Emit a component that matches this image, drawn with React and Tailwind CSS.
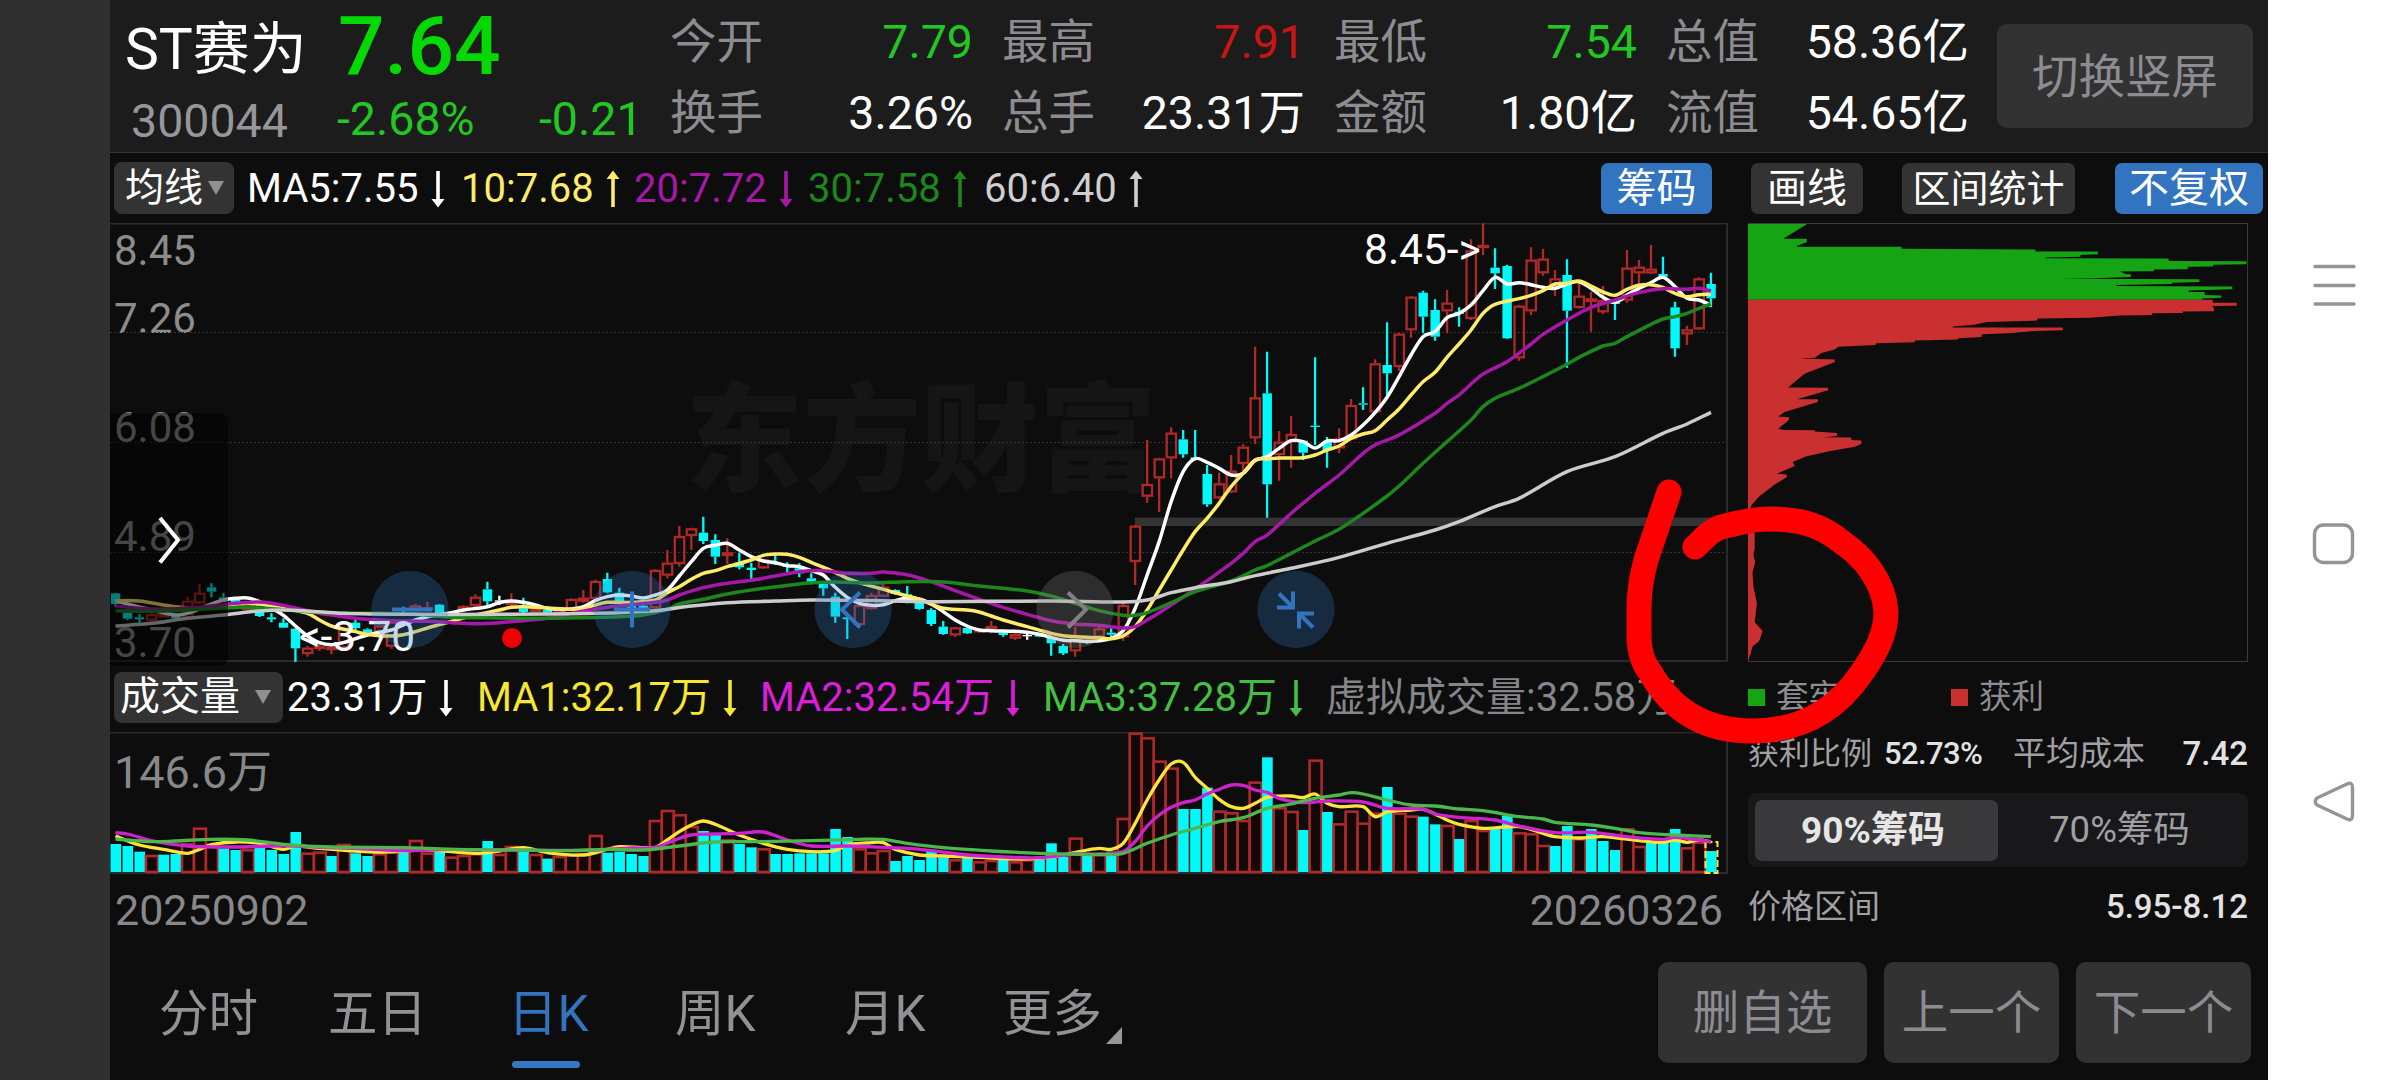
import clsx from "clsx";

const STEP = 11.996;
const xAt = (i) => 5.5 + i * STEP;

// Candles: [type, body top, body bottom, high, low], in thirds of a pixel.
// r = rising (hollow), c = falling (filled), w = flat
const EARLY_CANDLES = [
  ["c", 580, 612, 578, 620], ["c", 638, 656, 635, 660], ["c", 652, 658, 643, 668], ["r", 642, 662, 640, 664],
  ["r", 643, 650, 640, 652], ["c", 645, 655, 643, 658], ["r", 602, 655, 590, 657], ["r", 578, 610, 553, 612],
  ["c", 562, 575, 550, 592], ["c", 592, 604, 578, 606], ["c", 600, 606, 598, 608], ["r", 605, 630, 603, 632],
  ["c", 628, 648, 626, 651], ["c", 652, 658, 640, 667], ["c", 668, 683, 655, 684], ["c", 686, 745, 684, 786],
  ["r", 743, 762, 738, 770], ["r", 738, 746, 725, 753], ["r", 740, 750, 736, 763], ["r", 668, 745, 666, 747],
  ["c", 668, 684, 660, 690], ["c", 688, 698, 685, 700], ["r", 676, 696, 674, 698], ["r", 665, 740, 663, 746],
  ["c", 628, 633, 620, 645], ["r", 616, 630, 612, 632], ["r", 622, 630, 605, 635], ["c", 614, 640, 612, 641],
  ["r", 636, 644, 634, 645], ["r", 618, 632, 616, 634], ["r", 590, 618, 583, 625], ["c", 568, 604, 545, 615],
  ["w", 601, 605, 587, 615], ["r", 605, 615, 580, 625], ["c", 625, 636, 593, 640], ["r", 628, 636, 624, 638],
  ["c", 630, 638, 628, 640], ["r", 628, 636, 626, 638], ["r", 597, 630, 595, 632], ["r", 593, 605, 570, 608],
  ["r", 543, 597, 539, 600], ["c", 537, 577, 518, 580], ["c", 578, 603, 563, 605], ["c", 608, 625, 602, 628],
  ["c", 617, 627, 614, 630], ["r", 510, 625, 508, 627], ["r", 488, 527, 450, 535], ["r", 408, 492, 378, 500],
  ["r", 385, 408, 383, 450], ["c", 398, 423, 350, 432], ["c", 420, 470, 403, 492], ["r", 457, 468, 415, 492],
  ["c", 488, 502, 458, 508], ["c", 503, 510, 488, 540], ["r", 478, 505, 476, 507], ["c", 488, 493, 465, 495],
  ["c", 496, 501, 487, 517], ["c", 505, 520, 490, 532], ["c", 535, 548, 520, 553], ["c", 552, 565, 545, 587],
  ["c", 590, 650, 578, 668], ["c", 652, 658, 645, 717], ["r", 615, 675, 612, 677], ["r", 585, 627, 578, 629],
  ["r", 560, 590, 552, 592], ["c", 570, 582, 568, 584], ["c", 583, 607, 558, 610], ["c", 605, 627, 600, 629],
  ["c", 630, 672, 625, 678], ["c", 680, 702, 663, 704], ["r", 682, 706, 680, 711], ["c", 684, 700, 682, 702],
  ["r", 688, 697, 686, 699], ["r", 678, 686, 663, 700], ["c", 698, 705, 690, 710], ["r", 702, 716, 698, 720],
  ["w", 705, 709, 698, 719], ["c", 704, 710, 700, 712], ["c", 712, 730, 708, 767], ["c", 738, 760, 732, 765],
  ["r", 705, 754, 680, 770], ["c", 722, 730, 720, 733], ["r", 685, 712, 680, 714], ["c", 698, 704, 685, 712],
  ["r", 615, 712, 600, 722], ["r", 377, 486, 375, 555], ["r", 252, 290, 120, 308], ["r", 175, 235, 173, 336],
  ["r", 98, 175, 82, 235], ["c", 118, 163, 90, 173], ["c", 172, 178, 90, 180],
];
const LATE_CANDLES = [
  ["c", 762, 853, 735, 860], ["r", 790, 835, 758, 837], ["r", 752, 817, 705, 819], ["r", 680, 732, 673, 757],
  ["r", 532, 655, 380, 672], ["c", 520, 793, 395, 893], ["r", 665, 705, 633, 782], ["r", 642, 665, 588, 743],
  ["c", 662, 698, 660, 720], ["c", 617, 621, 412, 675], ["c", 665, 690, 651, 743], ["r", 655, 685, 625, 700],
  ["r", 555, 658, 537, 660], ["c", 550, 554, 502, 570], ["r", 430, 577, 418, 580], ["c", 435, 460, 307, 525],
  ["r", 341, 441, 338, 453], ["r", 230, 331, 228, 353], ["c", 218, 290, 212, 340], ["c", 270, 350, 238, 362],
  ["r", 248, 274, 210, 340], ["c", 275, 282, 262, 320], ["r", 91, 297, 58, 300], ["r", 75, 84, 10, 105],
  ["c", 143, 160, 85, 207], ["c", 138, 355, 134, 357], ["r", 257, 415, 254, 422], ["r", 119, 274, 82, 285],
  ["r", 116, 160, 87, 167], ["r", 175, 195, 150, 228], ["c", 165, 272, 118, 443], ["r", 227, 264, 180, 266],
  ["r", 235, 246, 215, 335], ["r", 240, 277, 198, 283], ["c", 240, 252, 238, 300], ["r", 143, 242, 90, 248],
  ["r", 140, 160, 120, 205], ["r", 146, 160, 75, 163], ["c", 162, 170, 110, 172], ["c", 262, 385, 245, 410],
  ["r", 328, 343, 317, 375], ["r", 175, 328, 172, 330], ["c", 192, 235, 158, 262],
];

const early = (v) => (v + 531) / 3;
const late = (v) => (v - 9) / 3;

const CANDLES = [
  ...EARLY_CANDLES.map(([t, ...v]) => [t, ...v.map(early)]),
  ...LATE_CANDLES.map(([t, ...v]) => [t, ...v.map(late)]),
];

// Moving averages: flat lists of "index,y"
const parse = (text, fn) =>
  text.trim().split(/\s+/).map((p) => {
    const [i, y] = p.split(",").map(Number);
    return [xAt(i), fn(y)];
  });

const smooth = (pts) =>
  pts.reduce((d, p, i) => {
    if (i === 0) return `M${p[0]},${p[1]}`;
    const a = pts[i - 2] || pts[i - 1];
    const b = pts[i - 1];
    const n = pts[i + 1] || p;
    const k = (p[0] - b[0]) / 3;
    const s1 = (p[1] - a[1]) / (p[0] - a[0]);
    const s2 = (n[1] - b[1]) / (n[0] - b[0]);
    return `${d}C${b[0] + k},${b[1] + s1 * k} ${p[0] - k},${p[1] - s2 * k} ${p[0]},${p[1]}`;
  }, "");

const PRICE_LINES = [
  {
    color: "#ffffff",
    early: `0,602 1,612 3,630 5,645 6,640 8,612 9,600 10,595 11,594 12,605 13,625 14,646 15,678 16,708 17,728 18,734 19,728 20,716
      21,705 22,697 23,690 24,675 25,660 26,650 28,638 29,630 31,620 32,608 33,603 34,607 35,615 36,625 37,628 38,627 39,620 40,602
      41,590 42,585 43,588 44,594 45,585 46,570 47,528 48,485 49,445 50,436 51,430 52,450 53,470 54,483 55,488 56,497 57,500 58,512
      59,525 60,562 61,592 62,610 63,616 64,614 65,602 66,595 67,597 68,612 69,635 70,660 71,678 72,690 73,692 75,694 76,697 77,703
      78,712 79,721 80,722 81,724 82,722 83,715 84,692 85,625`,
    late: `86,1065 87,965 88,845 89,755 90,716 91,727 92,745 93,765 94,760 95,722 96,710 97,685 98,662 99,665 100,684 101,663 102,662
      103,645 104,615 105,578 106,532 107,470 108,405 109,350 110,335 111,293 112,280 113,255 114,212 115,172 116,192 117,188 118,194
      119,202 120,205 121,192 122,185 123,205 124,232 125,247 126,225 127,205 128,188 129,172 130,200 131,235 132,240 133,256`,
  },
  {
    color: "#ffec6a",
    early: `0,602 2,603 4,615 6,624 8,624 10,612 12,612 14,625 16,640 17,660 18,678 20,695 21,703 22,707 23,708 24,704 25,695 26,684
      27,674 28,664 30,645 32,630 33,622 34,620 36,624 38,628 39,626 40,615 41,607 43,607 45,600 46,578 47,560 48,538 49,520 50,512
      51,500 53,480 54,466 55,462 56,463 57,472 58,487 60,517 61,535 62,548 64,568 66,588 67,598 68,612 69,625 71,630 72,636 73,648
      74,660 76,680 78,700 79,707 80,710 82,713 83,716 84,708 85,680`,
    late: `86,1170 87,1110 88,1050 89,990 90,935 91,895 92,850 93,800 94,760 95,720 96,717 97,714 99,713 100,705 101,690 102,678 103,655
      104,642 105,632 106,600 107,567 108,525 109,485 110,457 111,412 112,372 113,330 114,280 115,253 117,236 118,226 119,212 120,192
      121,190 122,183 123,198 124,216 125,226 126,208 127,196 128,194 129,202 130,220 131,230 132,224 133,222`,
  },
  {
    color: "#a818a8",
    early: `0,618 3,627 6,624 8,618 10,610 12,606 13,610 15,624 17,640 19,650 21,658 23,662 26,664 28,668 30,671 32,668 34,662 36,655
      38,640 41,622 43,614 45,607 46,600 47,585 49,563 51,550 53,541 55,528 57,515 59,512 61,520 63,520 64,516 66,524 68,545 70,572
      72,598 74,622 76,643 78,662 80,672 82,676 84,684 85,680`,
    late: `86,1200 87,1178 90,1107 93,1030 94,1000 95,965 96,945 98,880 100,820 102,765 104,700 105,675 107,645 110,580 111,550 112,525
      113,492 114,462 116,425 118,372 119,343 121,300 123,262 125,240 127,218 129,206 131,208 132,205 133,213`,
  },
  {
    color: "#1d861d",
    early: `0,632 3,634 6,630 9,624 11,622 13,626 16,635 19,640 22,640 25,643 28,652 31,653 35,655 39,653 42,650 44,645 46,628 47,612
      49,598 51,582 54,565 57,552 58,548 60,546 63,549 66,545 69,546 72,558 74,565 76,573 78,588 80,610 82,632 84,646 85,646`,
    late: `86,1178 88,1148 90,1115 93,1083 95,1050 96,1037 98,1000 100,963 102,928 104,880 106,828 107,798 109,730 111,665 112,633
      113,600 114,560 115,535 117,505 119,470 121,433 122,412 124,378 125,370 126,350 128,313 129,297 130,290 131,280 132,265 133,252`,
  },
  {
    color: "#cccccc",
    early: `0,678 3,670 6,655 9,645 12,633 14,630 16,633 19,640 24,643 32,643 40,640 45,632 48,618 51,608 55,603 58,600 64,602 68,605
      78,603 84,606`,
    late: `86,1140 88,1118 90,1103 93,1085 95,1067 98,1045 102,1012 106,970 110,930 112,905 115,860 117,835 121,755 125,710 129,640
      131,612 133,577`,
  },
].map((l) => ({ color: l.color, d: smooth([...parse(l.early, early), ...parse(l.late, late)]) }));

const vol = (v) => (v - 36) / 3;

const VOLUMES = `c372 c378 c395 r405 c404 c402 r370 r323 r372 c385 c390 r388 c375 c390 c402 c336 r398 r395 c408 r372 c400 c408 r400
  r395 c392 r360 r398 c395 r410 r405 r400 c363 r402 r378 c392 r402 c416 r408 r402 r400 r345 c398 c395 c402 c408 r300 r270 r283 r318
  c333 c345 r358 c372 c382 r385 c402 c402 c400 c400 c400 c327 c351 r385 r397 r390 c423 c408 c420 c393 c412 r418 c412 r424 r420 c420
  r424 r418 c418 c370 c410 r353 c405 r402 c395 r294 r38 r52 r122 r143 c267 c267 c203 r272 r277 r300 r185 c112 r262 r273 c330 r119
  c276 r310 r272 r308 r278 c201 r278 r287 c290 c313 r315 c357 r300 r330 c322 c287 r337 r340 r375 c378 c318 r355 c327 c363 c390 r325
  r378 c368 c365 c327 r382 r365 c393`
  .split(/\s+/)
  .map((v) => ({ type: v[0], top: vol(Number(v.slice(1))) }));

const VOLUME_LINES = [
  {
    color: "#ffe43c",
    points: `0,348 2,375 4,388 6,400 7,388 8,374 10,366 12,370 14,388 15,378 17,385 20,393 22,396 26,390 30,400 32,393 34,383 36,398
      39,405 41,388 42,380 45,382 46,360 47,335 48,315 49,303 50,313 52,345 54,370 56,388 58,395 60,392 61,375 63,368 64,368 65,388
      67,405 69,408 72,412 75,417 77,415 79,405 81,390 82,385 83,388 84,370 85,310 86,240 87,180 88,132 89,127 90,172 91,205 92,238
      93,260 94,265 95,250 96,232 98,228 99,233 100,222 101,250 102,260 104,260 105,290 106,276 108,270 109,268 110,282 111,300
      112,313 114,325 117,320 119,340 120,350 122,354 124,350 127,362 129,367 130,360 131,367 132,360 133,366`,
  },
  {
    color: "#cf22cf",
    points: `0,338 1,342 3,362 6,378 10,381 13,378 15,378 17,382 20,385 24,392 28,388 32,390 38,391 40,390 43,384 45,382 47,355 48,345
      50,342 52,340 54,336 56,360 58,378 61,378 64,382 66,385 68,392 71,405 74,411 77,413 80,402 82,402 84,395 85,365 86,318 87,285
      88,262 89,248 90,240 91,222 92,208 93,195 94,196 95,210 96,217 97,235 99,248 101,243 104,246 106,265 109,267 110,282 112,292
      115,300 117,318 120,338 123,337 126,350 129,358 130,352 132,360 133,365`,
  },
  {
    color: "#4cb84c",
    points: `0,357 3,365 5,363 8,358 11,360 14,373 18,381 24,383 28,388 34,390 38,392 41,388 44,390 47,378 50,366 54,365 58,362 62,358
      64,358 66,370 69,383 73,393 77,400 83,404 84,400 86,370 88,345 90,325 92,305 94,293 96,265 98,252 100,235 102,225 103,218
      104,222 106,240 108,255 110,258 112,267 114,272 117,290 119,297 120,307 123,315 125,325 127,338 130,345 133,350`,
  },
].map((l) => ({ color: l.color, d: smooth(parse(l.points, vol)) }));

const CHIPS_LOSS = `0,0 133,0 79,43 132,43 132,53 110,63 110,66 345,66 345,72 646,74 646,80 786,80 786,88 747,90 747,95 668,97
  668,99 945,100 945,107 1120,108 1120,117 1045,118 1045,123 988,124 988,131 912,132 912,137 836,138 848,145 860,146 860,154 778,157
  700,159 1014,160 1014,168 953,170 953,174 828,177 828,180 1088,181 1088,189 990,193 990,197 1026,197 1026,206 1063,207 1063,214
  1020,216 1020,220 0,220`;
const CHIPS_GAIN = `0,220 1044,220 1044,228 1098,228 1098,237 1043,238 1047,246 1047,253 977,254 977,258 908,259 908,264 836,265
  767,272 650,274 650,280 537,284 508,292 460,297 460,300 707,300 707,308 644,310 584,317 525,320 525,328 472,331 472,335 375,338
  375,343 287,346 287,351 203,356 195,364 165,374 150,388 115,390 195,393 195,400 127,434 90,474 180,475 180,482 110,508 157,508
  157,516 82,545 68,558 92,560 92,568 68,594 80,597 150,598 150,602 200,606 200,615 170,618 232,619 232,626 255,628 255,637 240,646
  185,658 130,674 100,690 105,702 65,724 87,726 87,734 60,755 25,790 8,815 4,830 10,880 15,900 15,940 12,960 16,980 10,1010 12,1050
  20,1100 15,1155 33,1180 25,1210 10,1225 5,1250 0,1266`;

const QUOTES = [
  [["今开", "7.79", "text-[#22c822]"], ["换手", "3.26%", "text-white"]],
  [["最高", "7.91", "text-[#cb1414]"], ["总手", "23.31万", "text-white"]],
  [["最低", "7.54", "text-[#22c822]"], ["金额", "1.80亿", "text-white"]],
  [["总值", "58.36亿", "text-white"], ["流值", "54.65亿", "text-white"]],
];

const MA_ITEMS = [
  { label: "MA5:7.55", up: false, className: "w-[214px] text-white" },
  { label: "10:7.68", up: true, className: "w-[173px] text-[#ffec6a]" },
  { label: "20:7.72", up: false, className: "w-[174px] text-[#a818a8]" },
  { label: "30:7.58", up: true, className: "w-[176px] text-[#1d861d]" },
  { label: "60:6.40", up: true, className: "text-[#cfcfcf]" },
];

const VOL_ITEMS = [
  { label: "23.31万", className: "w-[190px] text-white" },
  { label: "MA1:32.17万", className: "w-[283px] text-[#f7e733]" },
  { label: "MA2:32.54万", className: "w-[283px] text-[#dc1edc]" },
  { label: "MA3:37.28万", className: "w-[283px] text-[#43bf43]" },
];

const Arrow = ({ up }) => (
  <svg width="14" height="38" viewBox="0 0 14 38" className={clsx("shrink-0", up && "rotate-180")}>
    <path d="M7 1V32" stroke="currentColor" strokeWidth="3.6" />
    <path d="M0.5 29H13.5L7 37.5Z" fill="currentColor" />
  </svg>
);

const Caret = () => (
  <svg width="16" height="14" viewBox="0 0 16 14" fill="#8f8f94">
    <path d="M0 0H16L8 14Z" />
  </svg>
);

const Header = () => (
  <header className="flex h-[153px] border-b border-[#363636] bg-[#1c1c1c]">
    <div className="w-[560px] pl-[15px]">
      <div className="flex h-[92px] items-center">
        <span className="w-[213px] whitespace-nowrap pt-[8px] text-[57px] leading-[68px] text-white">ST赛为</span>
        <span className="text-[82px] font-medium text-[#05d905]">7.64</span>
      </div>
      <div className="flex h-[54px] items-center text-[46.5px]">
        <span className="w-[212px] pl-[6px] pt-[4px] text-[#97979b]">300044</span>
        <span className="w-[202px] text-[#22c822]">-2.68%</span>
        <span className="text-[#22c822]">-0.21</span>
      </div>
    </div>
    <div className="flex gap-[29px] pt-[7px] text-[46.5px]">
      {QUOTES.map((column) => (
        <div key={column[0][0]} className="w-[303px]">
          {column.map(([label, value, color]) => (
            <div key={label} className="flex h-[71px] items-center justify-between">
              <span className="text-[#8c8c91]">{label}</span>
              <span className={color}>{value}</span>
            </div>
          ))}
        </div>
      ))}
    </div>
    <button className="ml-[28px] mt-[24px] h-[104px] w-[256px] rounded-[10px] bg-[#323232] pt-[2px] text-[46.5px] text-[#8c8c91]">
      切换竖屏
    </button>
  </header>
);

const ToolButton = ({ active, className, children }) => (
  <button
    className={clsx("h-[51px] rounded-[7px] pt-px text-white", active ? "bg-[#3274c0]" : "bg-[#333333]", className)}
  >
    {children}
  </button>
);

const AverageBar = () => (
  <div className="flex h-[70px] items-center pl-[4px]">
    <div className="flex h-[52px] w-[120px] items-center gap-[5px] rounded-[8px] bg-[#333333] pl-[11px] text-[39px] text-white">
      均线
      <Caret />
    </div>
    <div className="ml-[13px] flex pt-px text-[40px]">
      {MA_ITEMS.map((item) => (
        <div key={item.label} className={clsx("flex items-center gap-[12px]", item.className)}>
          {item.label}
          <Arrow up={item.up} />
        </div>
      ))}
    </div>
    <div className="ml-auto flex pr-[5px]">
      <ToolButton active className="w-[111px] text-[40px]">筹码</ToolButton>
      <ToolButton className="ml-[39px] w-[112px] text-[40px]">画线</ToolButton>
      <ToolButton className="ml-[39px] w-[173px] text-[38px]">区间统计</ToolButton>
      <ToolButton active className="ml-[40px] w-[148px] text-[40px]">不复权</ToolButton>
    </div>
  </div>
);

const COLORS = { r: "#b02828", c: "#00fafa", w: "#ffffff" };

const Candle = ({ index, data }) => {
  const [type, top, bottom, high, low] = data;
  const x = xAt(index);
  const color = COLORS[type];
  return (
    <g stroke={color} strokeWidth="2.3">
      <path d={`M${x},${high}V${top}M${x},${bottom}V${low}`} />
      {type === "r" ? (
        <rect x={x - 4.5} y={top + 1} width="9.4" height={Math.max(bottom - top - 2, 1)} fill="none" />
      ) : (
        <rect x={x - 4.6} y={top} width="9.4" height={Math.max(bottom - top, 1)} fill={color} strokeWidth="0" />
      )}
    </g>
  );
};

const RoundButton = ({ x, muted, children }) => (
  <g
    transform={`translate(${x} 386.5)`}
    fill="none"
    stroke={muted ? "#808080" : "#3274c0"}
    strokeWidth="4"
  >
    <circle r="38.7" fill={muted ? "#808080" : "#3076c6"} fillOpacity="0.28" stroke="none" />
    {children}
  </g>
);

const AXIS = [
  ["8.45", "top-[6px]"],
  ["7.26", "top-[74px]"],
  ["6.08", "top-[183px]"],
  ["4.89", "top-[292px]"],
  ["3.70", "top-[398px]"],
];

const PriceChart = () => (
  <div className="relative h-[439px]">
    <span className="absolute left-[575px] top-[144px] text-[118px] font-black leading-[150px] text-[#151515]">
      东方财富
    </span>
    {AXIS.map(([label, top]) => (
      <span key={label} className={clsx("absolute left-[4px] text-[42px] leading-[44px] text-[#8c8c8c]", top)}>
        {label}
      </span>
    ))}
    <svg width="1618" height="439" className="absolute left-0 top-0">
      <g stroke="#333333" strokeDasharray="2 2">
        <path d="M0 109.5H1617M0 219.5H1617M0 329.5H1617" />
      </g>
      <path d="M0 0.5H1617V438H0" fill="none" stroke="#2a2a2a" strokeWidth="2" />
      <rect x="1025" y="294.5" width="592" height="8.5" fill="#333333" />
      {CANDLES.map((data, i) => (
        <Candle key={i} index={i} data={data} />
      ))}
      {PRICE_LINES.map((line) => (
        <path key={line.color} d={line.d} fill="none" stroke={line.color} strokeWidth="3.5" />
      ))}
      <circle cx="402" cy="415" r="10" fill="#ee0000" />
    </svg>
    <span className="absolute left-[189px] top-[392px] text-[42.5px] leading-[44px] text-white">&lt;-3.70</span>
    <span className="absolute left-[1254px] top-[5px] text-[42.5px] leading-[44px] text-white">8.45-&gt;</span>
    <div className="absolute left-0 top-[190px] h-[253px] w-[118px] rounded-r-[8px] bg-black/50" />
    <svg width="1618" height="439" className="absolute left-0 top-0">
      <path d="M50 295L68 317L50 339.5" fill="none" stroke="#ffffff" strokeWidth="4" />
      <RoundButton x={300}>
        <path d="M-18 0H22" />
      </RoundButton>
      <RoundButton x={522}>
        <path d="M-18 0H18M0 -18V18" />
      </RoundButton>
      <RoundButton x={743}>
        <path d="M7 -17L-11 0L7 18" />
      </RoundButton>
      <RoundButton x={965} muted>
        <path d="M-7 -17L11 0L-7 18" />
      </RoundButton>
      <RoundButton x={1186}>
        <path d="M-17 -16L-4 -3M-3 -18V-2H-19M3 19V4H18M4 5L17 18" />
      </RoundButton>
    </svg>
  </div>
);

const VolumeBar = () => (
  <div className="flex h-[70px] items-center pl-[4px] text-[40px]">
    <div className="flex h-[51px] w-[169px] items-center gap-[15px] rounded-[8px] bg-[#333333] pl-[6px] text-white">
      成交量
      <Caret />
    </div>
    <div className="ml-[4px] flex pt-px">
      {VOL_ITEMS.map((item) => (
        <div key={item.label} className={clsx("flex shrink-0 items-center gap-[12px]", item.className)}>
          {item.label}
          <Arrow />
        </div>
      ))}
    </div>
    <span className="whitespace-nowrap pt-px text-[#86868a]">虚拟成交量:32.58万</span>
  </div>
);

const VolumeChart = () => (
  <div className="relative h-[142px]">
    <span className="absolute left-[4px] top-[16px] text-[45px] leading-[50px] text-[#88888a]">146.6万</span>
    <svg width="1618" height="142" className="absolute left-0 top-0">
      <path d="M0 0.5H1617V141H0" fill="none" stroke="#2a2a2a" strokeWidth="2" />
      {VOLUMES.map(({ type, top }, i) =>
        type === "r" ? (
          <rect
            key={i}
            x={xAt(i) - 5.5}
            y={top + 1}
            width="12"
            height={139 - top}
            fill="#120808"
            stroke="#b02828"
            strokeWidth="2.6"
          />
        ) : (
          <rect key={i} x={xAt(i) - 5} y={top} width="10.6" height={140 - top} fill="#00fafa" />
        )
      )}
      <rect
        x={xAt(133) - 5.5}
        y="110"
        width="12"
        height="31"
        fill="none"
        stroke="#ffe43c"
        strokeWidth="2"
        strokeDasharray="7 3"
      />
      {VOLUME_LINES.map((line) => (
        <path key={line.color} d={line.d} fill="none" stroke={line.color} strokeWidth="3.3" />
      ))}
    </svg>
  </div>
);

const ChipPanel = () => (
  <aside className="ml-[20px] w-[500px]">
    <div className="h-[439px] w-[500px] border border-[#3a3a3a]">
      <svg width="499" height="438" viewBox="0 0 1121 1270" preserveAspectRatio="none" className="-ml-px">
        <polygon points={CHIPS_LOSS} fill="#14a414" />
        <polygon points={CHIPS_GAIN} fill="#cb3030" />
      </svg>
    </div>
    <div className="flex h-[70px] items-center text-[32.5px] text-[#8c8c91]">
      <i className="mr-[11px] h-[17px] w-[17px] bg-[#14a414]" />
      <span className="w-[175px] pt-px">套牢</span>
      <i className="mr-[11px] h-[17px] w-[17px] bg-[#cb3030]" />
      <span className="pt-px">获利</span>
    </div>
    <div className="flex h-[42px] items-center text-[33px] text-[#a0a0a4]">
      <span className="w-[136px] whitespace-nowrap text-[31px]">获利比例</span>
      <span className="w-[129px] text-[31px] font-medium tracking-[-0.6px] text-[#e2e2e2]">52.73%</span>
      <span>平均成本</span>
      <span className="ml-auto font-medium text-[#e2e2e2]">7.42</span>
    </div>
    <div className="mt-[19px] flex h-[74px] items-center rounded-[8px] bg-[#18181a] p-[7px]">
      <button className="h-[61px] w-[243px] rounded-[7px] bg-[#39393b] pr-[7px] text-[37px] font-bold text-[#e6e6e6]">
        90%筹码
      </button>
      <button className="h-[61px] flex-1 text-[36.5px] text-[#a0a0a4]">70%筹码</button>
    </div>
    <div className="mt-[14px] flex h-[50px] items-center justify-between text-[33px]">
      <span className="text-[#a0a0a4]">价格区间</span>
      <span className="font-medium text-[#e2e2e2]">5.95-8.12</span>
    </div>
  </aside>
);

const ActionButton = ({ className, children }) => (
  <button className={clsx("h-[101px] rounded-[10px] bg-[#323232] pt-[2px] text-[46.5px] text-[#8c8c91]", className)}>
    {children}
  </button>
);

const TABS = [
  ["分时", "w-[169px]"],
  ["五日", "w-[181px]"],
  ["日K", "w-[166px]"],
  ["周K", "w-[170px]"],
  ["月K", "w-[158px]"],
];

const Footer = () => (
  <footer className="flex h-[135px] items-center pl-[49px] pr-[17px]">
    <nav className="flex pt-[4px] text-[49.5px] text-[#929296]">
      {TABS.map(([label, width]) => (
        <div key={label} className={width}>
          {label === "日K" ? (
            <div className="relative -ml-px text-[#3274c0]">
              {label}
              <i className="absolute -bottom-[29px] left-[4px] h-[7px] w-[68px] rounded-full bg-[#3477c4]" />
            </div>
          ) : (
            label
          )}
        </div>
      ))}
      <div className="relative">
        更多
        <svg width="16" height="17" className="absolute -bottom-[5px] -right-[20px]" fill="#97979b">
          <path d="M16 0V17H0Z" />
        </svg>
      </div>
    </nav>
    <div className="ml-auto flex gap-[17px]">
      <ActionButton className="w-[209px]">删自选</ActionButton>
      <ActionButton className="w-[175px]">上一个</ActionButton>
      <ActionButton className="w-[175px]">下一个</ActionButton>
    </div>
  </footer>
);

const SystemBar = () => (
  <div className="w-[132px] bg-white">
    <svg width="132" height="1080" fill="none" stroke="#949494" strokeWidth="3.4" strokeLinejoin="round">
      <path d="M47 266.5H86M47 285.500H86M47 304H86" strokeLinecap="round" />
      <rect x="46.5" y="525" width="38" height="37.5" rx="9" />
      <path d="M79 784Q84.500 781.500 84.500 787.500V815.500Q84.500 821.500 79 819L49 805Q45.500 801.500 49 798Z" />
    </svg>
  </div>
);

export default function App() {
  return (
    <div className="relative flex h-[1080px] w-[2400px] overflow-hidden bg-[#0d0d0d] font-['Roboto','Noto_Sans_CJK_SC',sans-serif] leading-none">
      <div className="w-[110px] bg-[#303030]" />
      <main className="w-[2158px]">
        <Header />
        <AverageBar />
        <div className="flex h-[722px]">
          <section className="w-[1618px]">
            <PriceChart />
            <VolumeBar />
            <VolumeChart />
            <div className="flex h-[72px] items-center justify-between px-[5px] text-[43px] text-[#88888a]">
              <span>20250902</span>
              <span>20260326</span>
            </div>
          </section>
          <ChipPanel />
        </div>
        <Footer />
      </main>
      <SystemBar />
      {/* hand-drawn mark */}
      <svg width="2400" height="1080" className="pointer-events-none absolute left-0 top-0">
        <path
          d="M1669 492L1646 560Q1639 585 1639 610V638Q1640 660 1650 672C1668 704 1698 731 1752 731C1812 731 1843 700 1861 674C1878 650 1886 632 1886 612C1884 580 1862 556 1843 543C1818 522 1794 519 1769 519C1750 519 1740 523 1725 526C1711 529 1705 538 1695 547"
          fill="none"
          stroke="#ff0000"
          strokeWidth="25"
          strokeLinecap="round"
          strokeLinejoin="round"
        />
      </svg>
    </div>
  );
}
